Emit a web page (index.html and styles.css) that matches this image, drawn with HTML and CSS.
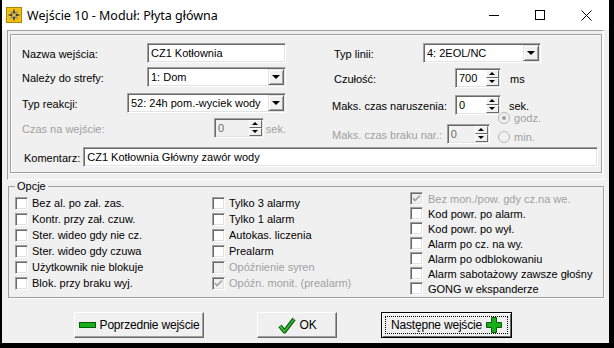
FILE: index.html
```html
<!DOCTYPE html>
<html lang="pl">
<head>
    <meta charset="UTF-8">
    <title>Wejście 10 - Moduł: Płyta główna</title>
    <link rel="stylesheet" href="styles.css">
</head>
<body>
<div class="window">
    <!-- Title bar -->
    <div class="titlebar">
        <svg class="app-icon" width="16" height="16" viewBox="0 0 16 16">
            <rect x="0" y="0" width="16" height="16" fill="#f2c012"/>
            <rect x="0.5" y="0.5" width="15" height="15" fill="none" stroke="#b08600"/>
            <polygon points="8,1.5 9.6,6.4 14.5,8 9.6,9.6 8,14.5 6.4,9.6 1.5,8 6.4,6.4" fill="#3a3a3a"/>
            <polygon points="3.5,3.5 8,6.3 12.5,3.5 9.7,8 12.5,12.5 8,9.7 3.5,12.5 6.3,8" fill="#8a8a8a"/>
            <circle cx="8" cy="8" r="1.6" fill="#f2c012"/>
        </svg>
        <span class="title">Wejście 10 - Moduł: Płyta główna</span>
        <div class="caption">
            <span class="cap-btn"><svg width="10" height="10"><line x1="0" y1="5.5" x2="10" y2="5.5" stroke="#000"/></svg></span>
            <span class="cap-btn"><svg width="10" height="10"><rect x="0.5" y="0.5" width="9" height="9" fill="none" stroke="#000"/></svg></span>
            <span class="cap-btn"><svg width="11" height="11"><path d="M0.5 0.5 L10.5 10.5 M10.5 0.5 L0.5 10.5" stroke="#000" fill="none"/></svg></span>
        </div>
    </div>

    <!-- Input settings -->
    <div class="frame">
        <div class="panel">
            <div class="cols">
                <div class="col col-left">
                    <div class="row">
                        <span class="lbl">Nazwa wejścia:</span>
                        <div class="edit w139">CZ1 Kotłownia</div>
                    </div>
                    <div class="row mt4">
                        <span class="lbl">Należy do strefy:</span>
                        <div class="edit combo w139">1: Dom<span class="drop"></span></div>
                    </div>
                    <div class="row mt6">
                        <span class="lbl">Typ reakcji:</span>
                        <div class="edit combo w159">52: 24h pom.-wyciek wody<span class="drop"></span></div>
                    </div>
                    <div class="row mt5 disabled">
                        <span class="lbl lbl-wait">Czas na wejście:</span>
                        <div class="edit spin off w50">0<span class="arrows"><i class="up"></i><i class="down"></i></span></div>
                        <span class="unit">sek.</span>
                    </div>
                </div>
                <div class="col col-right">
                    <div class="row">
                        <span class="lbl lbl-type">Typ linii:</span>
                        <div class="edit combo w118">4: 2EOL/NC<span class="drop"></span></div>
                    </div>
                    <div class="row mt5">
                        <span class="lbl lbl-sens">Czułość:</span>
                        <div class="edit spin w46">700<span class="arrows"><i class="up"></i><i class="down"></i></span></div>
                        <span class="unit u-ms">ms</span>
                    </div>
                    <div class="row mt7">
                        <span class="lbl lbl-max">Maks. czas naruszenia:</span>
                        <div class="edit spin w46">0<span class="arrows"><i class="up"></i><i class="down"></i></span></div>
                        <span class="unit u-sek">sek.</span>
                    </div>
                    <div class="row mt9 disabled">
                        <span class="lbl lbl-max">Maks. czas braku nar.:</span>
                        <div class="edit spin off w46">0<span class="arrows"><i class="up"></i><i class="down"></i></span></div>
                        <div class="radios">
                            <span class="radio"><span class="dot on"></span>godz.</span>
                            <span class="radio"><span class="dot"></span>min.</span>
                        </div>
                    </div>
                </div>
            </div>
            <div class="row comment">
                <span class="lbl-comment">Komentarz:</span>
                <div class="edit w515">CZ1 Kotłownia Główny zawór wody</div>
            </div>
        </div>
    </div>

    <!-- Options -->
    <fieldset class="options">
        <legend>Opcje</legend>
        <div class="opt-cols">
            <div class="opt-col c1">
                <div class="check"><span class="box"></span>Bez al. po zał. zas.</div>
                <div class="check"><span class="box"></span>Kontr. przy zał. czuw.</div>
                <div class="check"><span class="box"></span>Ster. wideo gdy nie cz.</div>
                <div class="check"><span class="box"></span>Ster. wideo gdy czuwa</div>
                <div class="check"><span class="box"></span>Użytkownik nie blokuje</div>
                <div class="check"><span class="box"></span>Blok. przy braku wyj.</div>
            </div>
            <div class="opt-col c2">
                <div class="check"><span class="box"></span>Tylko 3 alarmy</div>
                <div class="check"><span class="box"></span>Tylko 1 alarm</div>
                <div class="check"><span class="box"></span>Autokas. liczenia</div>
                <div class="check"><span class="box"></span>Prealarm</div>
                <div class="check disabled"><span class="box"></span>Opóźnienie syren</div>
                <div class="check disabled"><span class="box"><svg width="9" height="9" viewBox="0 0 9 9"><path d="M1 4 L3 6.5 L8 1.5" stroke="#a0a0a0" stroke-width="1.6" fill="none"/></svg></span>Opóźn. monit. (prealarm)</div>
            </div>
            <div class="opt-col c3">
                <div class="check disabled"><span class="box"><svg width="9" height="9" viewBox="0 0 9 9"><path d="M1 4 L3 6.5 L8 1.5" stroke="#a0a0a0" stroke-width="1.6" fill="none"/></svg></span>Bez mon./pow. gdy cz.na we.</div>
                <div class="check"><span class="box"></span>Kod powr. po alarm.</div>
                <div class="check"><span class="box"></span>Kod powr. po wył.</div>
                <div class="check"><span class="box"></span>Alarm po cz. na wy.</div>
                <div class="check"><span class="box"></span>Alarm po odblokowaniu</div>
                <div class="check"><span class="box"></span>Alarm sabotażowy zawsze głośny</div>
                <div class="check"><span class="box"></span>GONG w ekspanderze</div>
            </div>
        </div>
    </fieldset>

    <!-- Dialog buttons -->
    <div class="buttons">
        <button class="btn btn-prev">
            <svg width="17" height="7" viewBox="0 0 17 7"><rect x="0.5" y="0.5" width="16" height="5" fill="#18b018" stroke="#0a5a0a"/></svg>
            Poprzednie wejście
        </button>
        <button class="btn btn-ok">
            <svg width="18" height="17" viewBox="0 0 18 17"><path d="M2 9 L6.5 14.5 L16 2" stroke="#0a4a0a" stroke-width="4" fill="none" stroke-linejoin="round"/><path d="M2 9 L6.5 14.5 L16 2" stroke="#2fc02f" stroke-width="2" fill="none" stroke-linejoin="round"/></svg>
            OK
        </button>
        <button class="btn btn-next">
            Następne wejście
            <svg width="16" height="16" viewBox="0 0 16 16"><path d="M5.5 0.5 H10.5 V5.5 H15.5 V10.5 H10.5 V15.5 H5.5 V10.5 H0.5 V5.5 H5.5 Z" fill="#18b018" stroke="#0a5a0a"/></svg>
        </button>
    </div>
</div>
</body>
</html>
```

FILE: styles.css
```css
body {
    margin: 0;
    background-color: #000;
    font-family: "Liberation Sans", Arial, sans-serif;
    font-size: 11px;
    color: #000;
}
.window {
    margin-left: 2px;
    width: 607px;
    height: 343px;
    background-color: #f0f0f0;
}

/* Title bar */
.titlebar {
    height: 30px;
    background-color: #fff;
    display: flex;
    align-items: center;
}
.app-icon {
    margin-left: 4px;
}
.title {
    margin-left: 5px;
    font-family: "Noto Sans", sans-serif;
    font-size: 12.5px;
    color: #000;
}
.caption {
    margin-left: auto;
    display: flex;
    height: 30px;
}
.cap-btn {
    width: 46px;
    display: flex;
    align-items: center;
    justify-content: center;
}

/* Sunken frame with the input settings */
.frame {
    margin: 0 5px 0 5px;
    height: 144px;
    border: 1px solid;
    border-color: #a0a0a0 #fff #fff #a0a0a0;
    padding: 3px 1px 1px 2px;
}
.panel {
    border: 1px solid #a0a0a0;
    box-shadow: inset 1px 1px #fff, 1px 1px #fff;
    padding: 8px 0 0 11px;
    box-sizing: border-box;
    height: 139px;
}
.cols {
    display: flex;
    height: 101px;
}
.col-left {
    width: 264px;
}
.col-right {
    margin-left: 46px;
    width: 209px;
}
.row {
    display: flex;
    align-items: center;
    height: 20px;
}
.col-left .row {
    justify-content: space-between;
}
.col-left .row.disabled {
    justify-content: flex-start;
}
.mt4 { margin-top: 4px; }
.mt5 { margin-top: 5px; }
.mt6 { margin-top: 6px; }
.mt7 { margin-top: 7px; }
.mt9 { margin-top: 9px; }
.lbl {
    padding-top: 2px;
}
.disabled .lbl, .disabled .unit, .radio {
    color: #a0a0a0;
}
.lbl-wait { width: 193px; }
.lbl-type { width: 89px; margin-left: 2px; }
.lbl-sens { width: 121px; margin-left: 2px; }
.lbl-max { width: 123px; }
.unit {
    margin-left: 2px;
    padding-top: 2px;
}
.u-ms { margin-left: 9px; }
.u-sek { margin-left: 8px; }

/* Edit boxes, combos, spins */
.edit {
    position: relative;
    height: 20px;
    box-sizing: border-box;
    background-color: #fff;
    border: 1px solid;
    border-color: #a0a0a0 #fff #fff #a0a0a0;
    box-shadow: inset 1px 1px #696969, inset -1px -1px #e3e3e3;
    padding: 3px 0 0 3px;
    line-height: 13px;
    font-size: 11px;
    white-space: nowrap;
}
.edit.off {
    background-color: #f0f0f0;
    color: #6d6d6d;
}
.w46 { width: 46px; }
.w50 { width: 50px; }
.w118 { width: 118px; }
.w139 { width: 139px; }
.w159 { width: 159px; }
.w515 { width: 515px; }
.drop {
    position: absolute;
    top: 1px;
    right: 1px;
    width: 16px;
    height: 16px;
    box-sizing: border-box;
    background-color: #f0f0f0;
    border: 1px solid;
    border-color: #e3e3e3 #696969 #696969 #e3e3e3;
    box-shadow: inset 1px 1px #fff, inset -1px -1px #a0a0a0;
}
.drop:after {
    content: "";
    position: absolute;
    left: 3px;
    top: 5px;
    border-left: 4px solid transparent;
    border-right: 4px solid transparent;
    border-top: 4px solid #000;
}
.arrows {
    position: absolute;
    top: 1px;
    right: 1px;
    width: 13px;
    height: 16px;
    display: flex;
    flex-direction: column;
}
.arrows i {
    position: relative;
    flex: 1;
    background-color: #f0f0f0;
    border: 1px solid;
    border-color: #fff #696969 #696969 #fff;
}
.arrows i:after {
    content: "";
    position: absolute;
    left: 2px;
    border-left: 3px solid transparent;
    border-right: 3px solid transparent;
}
.arrows .up:after {
    top: 1px;
    border-bottom: 3px solid #000;
}
.arrows .down:after {
    top: 1px;
    border-top: 3px solid #000;
}

/* Radio buttons */
.radios {
    align-self: flex-start;
    margin-top: -14px;
    margin-left: 8px;
    display: flex;
    flex-direction: column;
    gap: 3px;
}
.radio {
    display: flex;
    align-items: center;
    height: 16px;
}
.dot {
    width: 10px;
    height: 10px;
    border-radius: 50%;
    border: 1px solid #b8b8b8;
    background-color: #f0f0f0;
    margin-right: 4px;
    position: relative;
}
.dot.on:after {
    content: "";
    position: absolute;
    left: 3px;
    top: 3px;
    width: 4px;
    height: 4px;
    border-radius: 50%;
    background-color: #a0a0a0;
}

.comment {
    margin-top: 3px;
}
.lbl-comment {
    margin-left: 2px;
    margin-right: 3px;
    padding-top: 2px;
}

/* Options group */
.options {
    margin: 0 5px 0 6px;
    padding: 0 0 1px 0;
    border: 1px solid #a0a0a0;
    box-shadow: 1px 1px #fff;
    min-width: 0;
}
.options legend {
    margin-left: 6px;
    padding: 0 2px;
    line-height: 12px;
}
.opt-cols {
    display: flex;
    padding-left: 6px;
}
.opt-col {
    display: flex;
    flex-direction: column;
}
.c1 { width: 197px; margin-top: 3px; }
.c2 { width: 198px; margin-top: 3px; }
.c3 { margin-top: -1px; }
.check {
    display: flex;
    align-items: center;
    height: 16px;
    white-space: nowrap;
}
.c3 .check {
    height: 15px;
}
.check .box {
    width: 13px;
    height: 13px;
    box-sizing: border-box;
    background-color: #fff;
    border: 1px solid;
    border-color: #a0a0a0 #fff #fff #a0a0a0;
    box-shadow: inset 1px 1px #696969, inset -1px -1px #e3e3e3;
    margin-right: 4px;
    display: flex;
    align-items: center;
    justify-content: center;
}
.c3 .check .box {
    margin-right: 5px;
}
.check.disabled {
    color: #a0a0a0;
}
.check.disabled .box {
    background-color: #f0f0f0;
}

/* Buttons */
.buttons {
    display: flex;
    margin-top: 14px;
    padding-left: 72px;
}
.btn {
    height: 26px;
    background-color: #f0f0f0;
    border: 1px solid;
    border-color: #fff #696969 #696969 #fff;
    box-shadow: inset -1px -1px #a0a0a0;
    font-family: "Liberation Sans", Arial, sans-serif;
    font-size: 12px;
    letter-spacing: -0.2px;
    color: #000;
    display: flex;
    align-items: center;
    justify-content: center;
    gap: 4px;
    padding: 0;
    position: relative;
}
.btn-prev { width: 130px; }
.btn-ok { width: 80px; margin-left: 53px; }
.btn-next { width: 131px; margin-left: 44px; border-color: #000; box-shadow: inset 1px 1px #fff, inset -1px -1px #696969; }
.btn-next:after {
    content: "";
    position: absolute;
    left: 3px;
    top: 3px;
    right: 3px;
    bottom: 3px;
    border: 1px dotted #000;
}
```
